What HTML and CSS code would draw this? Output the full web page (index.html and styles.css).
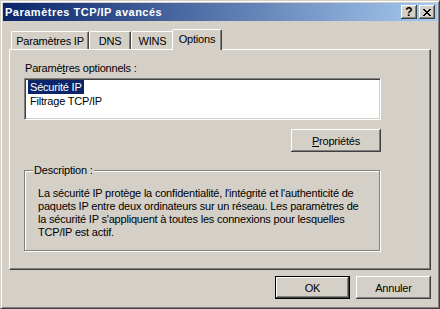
FILE: index.html
```html
<!DOCTYPE html>
<html lang="fr">
<head>
<meta charset="utf-8">
<title>Paramètres TCP/IP avancés</title>
<link rel="stylesheet" href="styles.css">
</head>
<body>
<div class="window">
  <div class="titlebar">
    <span class="title">Paramètres TCP/IP avancés</span>
    <div class="caption-btns">
      <div class="cbtn help">?</div>
      <div class="cbtn close">
        <svg width="8" height="7" viewBox="0 0 8 7" shape-rendering="crispEdges">
          <path d="M0 0h2v1H0z M6 0h2v1H6z M1 1h2v1H1z M5 1h2v1H5z M2 2h4v1H2z M3 3h2v1H3z M2 4h4v1H2z M1 5h2v1H1z M5 5h2v1H5z M0 6h2v1H0z M6 6h2v1H6z" fill="#000"/>
        </svg>
      </div>
    </div>
  </div>
  <div class="client">
    <div class="tabs">
      <div class="tab t1">Paramètres IP</div>
      <div class="tab t2">DNS</div>
      <div class="tab t3">WINS</div>
      <div class="tab t4 active">Options</div>
    </div>
    <div class="panel">
      <div class="label">Paramè<u>t</u>res optionnels :</div>
      <div class="listbox">
        <div class="item"><span class="sel">Sécurité IP</span></div>
        <div class="item"><span class="txt">Filtrage TCP/IP</span></div>
      </div>
      <div class="btnrow"><div class="btn props"><u>P</u>ropriétés</div></div>
      <div class="group">
        <div class="legend">Description :</div>
        <p class="desc">La sécurité IP protège la confidentialité, l'intégrité et l'authenticité de<br>paquets IP entre deux ordinateurs sur un réseau. Les paramètres de<br>la sécurité IP s'appliquent à toutes les connexions pour lesquelles<br>TCP/IP est actif.</p>
      </div>
    </div>
    <div class="footer">
      <div class="btn default">OK</div>
      <div class="btn">Annuler</div>
    </div>
  </div>
</div>
</body>
</html>
```

FILE: styles.css
```css
* { box-sizing: border-box; }
html, body { margin: 0; padding: 0; }
body {
  width: 440px;
  height: 309px;
  overflow: hidden;
  background: #D4D0C8;
  font-family: "Liberation Sans", Arial, sans-serif;
  font-size: 11px;
  letter-spacing: -0.2px;
  color: #000;
}
.window {
  width: 440px;
  height: 309px;
  border: 1px solid;
  border-color: #D4D0C8 #404040 #404040 #D4D0C8;
  box-shadow: inset 1px 1px 0 #fff, inset -1px -1px 0 #808080;
  padding: 2px;
  display: flex;
  flex-direction: column;
  background: #D4D0C8;
}
.titlebar {
  height: 18px;
  flex: none;
  background: linear-gradient(to right, #0A246A, #A6CAF0);
  display: flex;
  align-items: center;
  padding: 0 2px 0 2px;
  color: #fff;
  font-weight: bold;
}
.title { letter-spacing: 0.5px; }
.caption-btns {
  margin-left: auto;
  display: flex;
  gap: 2px;
}
.cbtn {
  width: 16px;
  height: 14px;
  background: #D4D0C8;
  box-shadow: inset -1px -1px 0 #404040, inset 1px 1px 0 #fff, inset -2px -2px 0 #808080;
  display: flex;
  align-items: center;
  justify-content: center;
  color: #000;
  font-weight: bold;
  font-size: 12px;
  line-height: 14px;
  letter-spacing: 0;
}
.cbtn svg { display: block; }
.client {
  flex: 1;
  margin-top: 1px;
  padding: 7px 6px 7px 6px;
  display: flex;
  flex-direction: column;
}
.tabs {
  height: 20px;
  flex: none;
  display: flex;
  align-items: flex-end;
  padding-left: 2px;
  position: relative;
  z-index: 1;
}
.tab {
  height: 18px;
  border-top: 1px solid #fff;
  border-left: 1px solid #fff;
  border-right: 1px solid #404040;
  border-radius: 2px 2px 0 0;
  box-shadow: inset -1px 0 0 #808080;
  background: #D4D0C8;
  display: flex;
  align-items: center;
  justify-content: center;
  white-space: nowrap;
}
.t1 { width: 78px; }
.t2 { width: 42px; }
.t3 { width: 43px; }
.t4 { width: 50px; }
.tab.active {
  height: 21px;
  margin: 0 -2px -1px -2px;
  padding-bottom: 3px;
}
.panel {
  flex: none;
  height: 221px;
  border: 1px solid;
  border-color: #fff #404040 #404040 #fff;
  box-shadow: inset -1px -1px 0 #808080;
  padding: 12px 0 0 14px;
}
.label {
  height: 13px;
  line-height: 13px;
  padding-left: 1px;
  white-space: nowrap;
}
.listbox {
  margin-top: 3px;
  width: 357px;
  height: 42px;
  background: #fff;
  border: 1px solid;
  border-color: #808080 #fff #fff #808080;
  box-shadow: inset 1px 1px 0 #404040, inset -1px -1px 0 #D4D0C8;
  padding: 1px 0 0 3px;
}
.item {
  height: 14px;
  line-height: 14px;
  white-space: nowrap;
}
.item .sel {
  display: inline-block;
  background: #0A246A;
  color: #fff;
  padding: 0 2px;
}
.item .txt {
  display: inline-block;
  padding: 0 2px;
}
.btnrow {
  margin-top: 9px;
  width: 357px;
  display: flex;
  justify-content: flex-end;
}
.btn {
  width: 75px;
  height: 23px;
  display: flex;
  align-items: center;
  justify-content: center;
  background: #D4D0C8;
  box-shadow: inset -1px -1px 0 #404040, inset 1px 1px 0 #fff, inset -2px -2px 0 #808080;
  white-space: nowrap;
}
.btn.props { width: 90px; }
.btn.default { border: 1px solid #000; }
.group {
  margin-top: 18px;
  width: 356px;
  height: 81px;
  border: 1px solid #808080;
  box-shadow: inset 1px 1px 0 #fff, 1px 1px 0 #fff;
  position: relative;
  padding: 16px 0 0 13px;
}
.legend {
  position: absolute;
  top: -7px;
  left: 8px;
  padding: 0 1px;
  background: #D4D0C8;
  line-height: 13px;
  white-space: nowrap;
}
.desc {
  margin: 0;
  line-height: 13px;
  white-space: nowrap;
}
.footer {
  margin-top: 6px;
  display: flex;
  justify-content: flex-end;
  gap: 6px;
}
```
